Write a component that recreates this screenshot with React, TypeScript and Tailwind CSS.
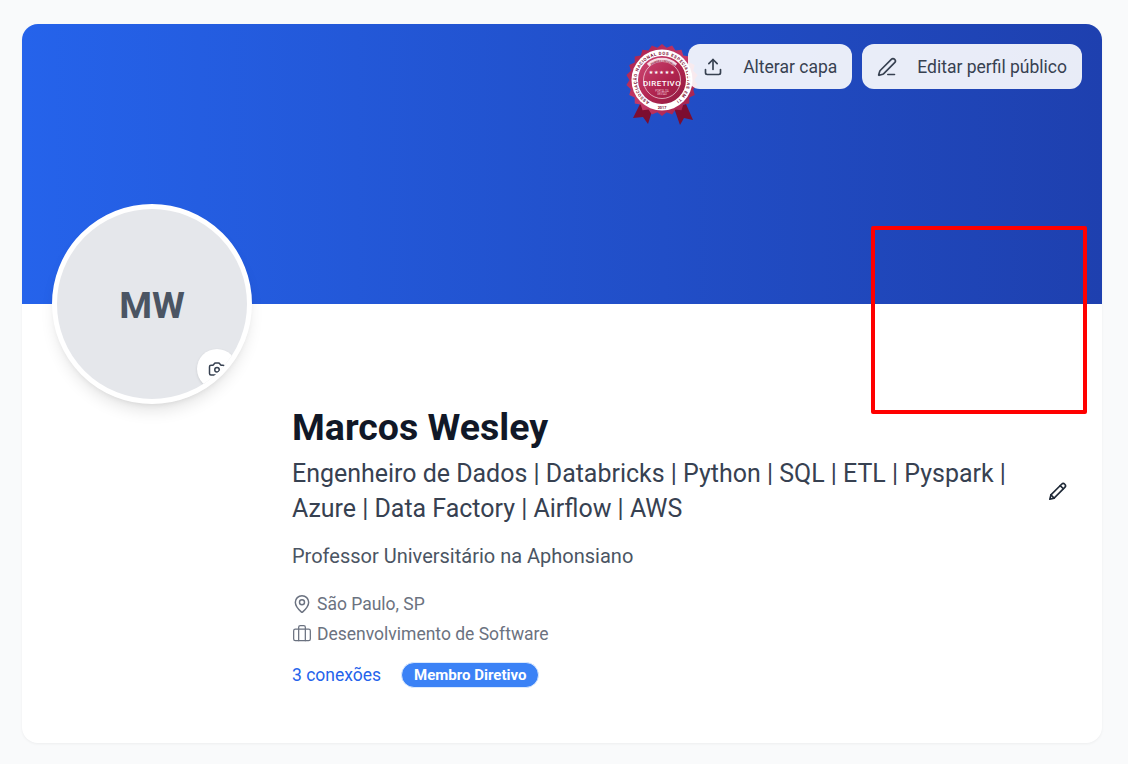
import { Upload, PenLine, MapPin, Briefcase, Camera } from "lucide-react";

function Seal() {
  const n = 22;
  const pts: string[] = [];
  for (let i = 0; i < n * 2; i++) {
    const r = i % 2 === 0 ? 36 : 32.5;
    const a = (Math.PI * i) / n;
    pts.push(`${40 + r * Math.sin(a)},${38 - r * Math.cos(a)}`);
  }
  return (
    <svg width="80" height="88" viewBox="0 0 80 88">
      <defs>
        <linearGradient id="sealG" x1="0" y1="0" x2="1" y2="1">
          <stop offset="0" stopColor="#cf4a76" />
          <stop offset="0.55" stopColor="#b0244f" />
          <stop offset="1" stopColor="#8f1a40" />
        </linearGradient>
        <linearGradient id="sealR" x1="0" y1="0" x2="1" y2="1">
          <stop offset="0" stopColor="#a31d4a" />
          <stop offset="0.5" stopColor="#c63a68" />
          <stop offset="1" stopColor="#9c1b45" />
        </linearGradient>
        <path id="sealArc" d="M 27.4 60 A 25.3 25.3 0 1 1 52.6 60" />
        <path id="sealArcIn" d="M 27 25 A 18.5 18.5 0 0 1 53 25" />
      </defs>
      <path d="M18 62 L11 76 L21 75 L26 82 L31 66 Z" fill="#7c0d30" />
      <path d="M52 66 L58 83 L62 76 L71 78 L64 62 Z" fill="#7c0d30" />
      <polygon points={pts.join(" ")} fill="url(#sealR)" />
      <circle cx="40" cy="38" r="30.5" fill="#fff" />
      <circle cx="40" cy="38" r="24" fill="url(#sealG)" />
      <circle cx="40" cy="38" r="18.5" fill="none" stroke="#fff" strokeWidth="0.6" />
      <text fontSize="4.3" fontWeight="700" fill="#7c0d30" fontFamily="Roboto, sans-serif">
        <textPath href="#sealArc" textLength="130" lengthAdjust="spacing">ASSOCIAÇÃO NACIONAL DOS ESPECIALISTAS EM TI</textPath>
      </text>
      <path d="M26 23 A 20.5 20.5 0 0 1 54 23" fill="none" stroke="#f6dbe4" strokeWidth="3.4" />
      <text fontSize="2.5" fontWeight="700" fill="#8f1a40" fontFamily="Roboto, sans-serif">
        <textPath href="#sealArcIn" startOffset="3">MEMBRO CREDENCIADO</textPath>
      </text>
      <text x="40" y="32" fontSize="5" fill="#fff" textAnchor="middle" fontFamily="'DejaVu Sans', sans-serif" letterSpacing="0.8">★★★★★</text>
      <text x="40" y="43.8" fontSize="8" fontWeight="500" fill="#fff" textAnchor="middle" fontFamily="Roboto, sans-serif" letterSpacing="0.4">DIRETIVO</text>
      <text x="40" y="49.5" fontSize="2.6" fill="#f3c6d4" textAnchor="middle" fontFamily="Roboto, sans-serif">PORTAL DA</text>
      <text x="40" y="53" fontSize="2.6" fill="#f3c6d4" textAnchor="middle" fontFamily="Roboto, sans-serif">GESTÃO</text>
      <text x="40" y="66.5" fontSize="3.8" fontWeight="700" fill="#7c0d30" textAnchor="middle" fontFamily="Roboto, sans-serif">2017</text>
    </svg>
  );
}

function ThinPencil() {
  return (
    <svg width="20" height="20" viewBox="0 0 20 20" fill="none" stroke="currentColor" strokeWidth="1.6" strokeLinejoin="round" strokeLinecap="round">
      <path d="M1.8 18.2 L2.9 13.9 L13.6 3.2 a2.1 2.1 0 0 1 3.2 3.2 L6.1 17.1 Z" />
      <path d="M12.2 4.6 L15.4 7.8" />
      <path d="M2.9 13.9 L6.1 17.1" />
    </svg>
  );
}

export default function App() {
  return (
    <div className="min-h-screen bg-[#f9fafb] pl-[22px] pr-[26px] pt-6 pb-[21px] font-['Roboto',sans-serif]">
      <div className="relative h-[719px] rounded-2xl bg-white shadow-[0_1px_3px_rgba(0,0,0,0.05)]">
        <div className="relative flex h-[280px] items-start justify-end gap-2.5 rounded-t-2xl bg-gradient-to-r from-[#2563eb] to-[#1e40af] p-5">
          <div className="absolute left-[600px] top-[18px]">
            <Seal />
          </div>
          <button className="relative flex h-[45px] items-center gap-5 rounded-xl bg-white/90 px-[15px] text-[17.5px] text-[#374151]">
            <Upload size={20} strokeWidth={2} />
            <span className="pt-px">Alterar capa</span>
          </button>
          <button className="flex h-[45px] items-center gap-5 rounded-xl bg-white/90 px-[15px] text-[17.5px] text-[#374151]">
            <PenLine size={20} strokeWidth={2} />
            <span className="pt-px">Editar perfil público</span>
          </button>
        </div>

        <div className="absolute left-[30px] top-[180px] h-[200px] w-[200px] overflow-hidden rounded-full border-[5px] border-white bg-[#e5e7eb] shadow-lg">
          <div className="flex h-full w-full items-center justify-center pt-[3px] text-[37.5px] font-bold text-[#4b5563]">MW</div>
          <div className="absolute left-[140px] top-[140px] flex h-[40px] w-[40px] items-center justify-center rounded-full bg-white shadow">
            <Camera size={18} className="text-[#374151]" />
          </div>
        </div>

        <div className="absolute left-[849px] top-[202px] h-[188px] w-[216px] rounded-[2px] border-4 border-[#ff0000]" />

        <div className="pl-[270px] pr-[34px] pt-[100px]">
          <h1 className="text-[37.5px] font-bold leading-[46px] text-[#111827]">Marcos Wesley</h1>
          <div className="mt-[6px] flex items-center">
            <p className="w-[730px] text-[24.96px] leading-[35px] text-[#374151]">
              Engenheiro de Dados | Databricks | Python | SQL | ETL | Pyspark | Azure | Data Factory | Airflow | AWS
            </p>
            <span className="ml-[26px] text-[#1f2937]">
              <ThinPencil />
            </span>
          </div>
          <p className="mt-[16px] text-[20px] leading-[28px] text-[#4b5563]">Professor Universitário na Aphonsiano</p>
          <div className="mt-[22px] flex items-center gap-[5px] text-[17.5px] leading-[24px] text-[#6b7280]">
            <MapPin size={20} strokeWidth={1.75} />
            São Paulo, SP
          </div>
          <div className="mt-[6px] flex items-center gap-[5px] text-[17.5px] leading-[24px] text-[#6b7280]">
            <Briefcase size={20} strokeWidth={1.5} />
            Desenvolvimento de Software
          </div>
          <div className="mt-[15px] flex items-center gap-5">
            <span className="text-[17.5px] leading-[28px] text-[#2563eb]">3 conexões</span>
            <span className="rounded-full border border-[#dbeafe] bg-[#3b82f6] px-3 py-[3px] text-[15px] font-bold leading-[18px] text-white">
              Membro Diretivo
            </span>
          </div>
        </div>
      </div>
    </div>
  );
}
